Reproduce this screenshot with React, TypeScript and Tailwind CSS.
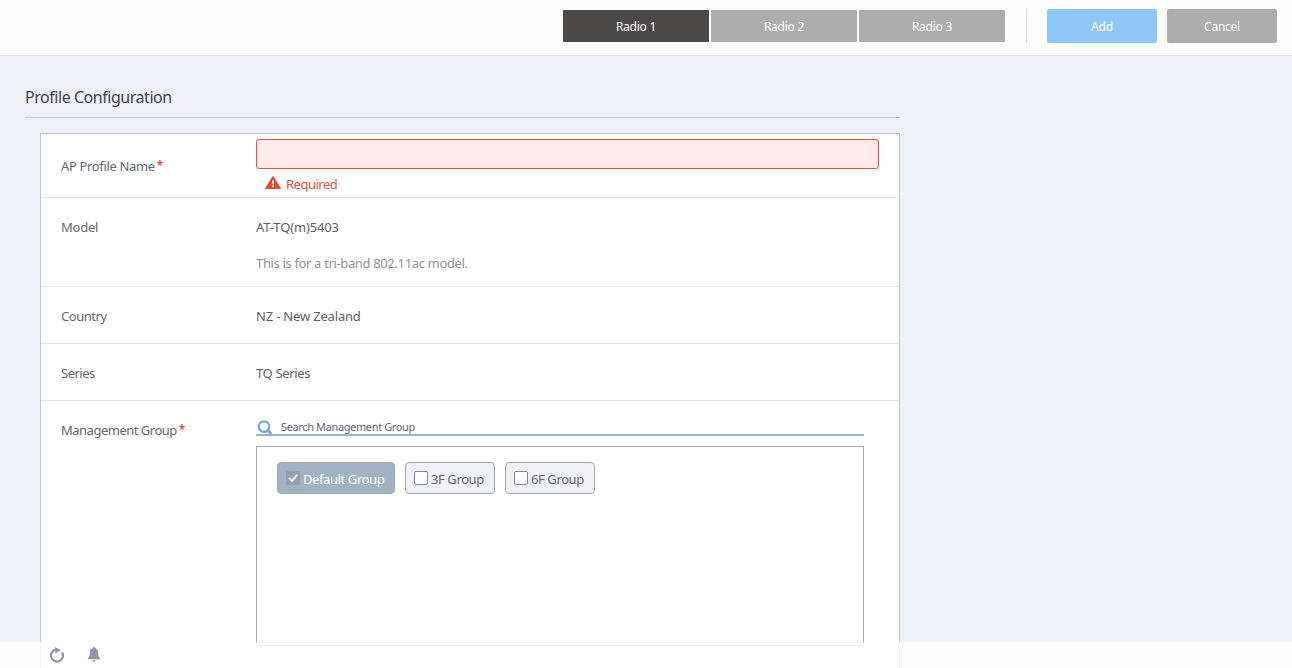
import React from "react";
import clsx from "clsx";

const RADIOS = ["Radio 1", "Radio 2", "Radio 3"];

const GROUPS = [
  { name: "Default Group", checked: true, width: "w-[118px]" },
  { name: "3F Group", checked: false, width: "w-[90px]" },
  { name: "6F Group", checked: false, width: "w-[90px]" },
];

function Header() {
  return (
    <header className="flex h-14 shrink-0 items-start justify-end border-b border-[#e2e4e6] bg-[#fcfcfc] pr-[15px] pt-[9px] text-[12px] tracking-[-0.25px] text-white">
      <div className="mt-px flex gap-[2px] bg-white">
        {RADIOS.map((radio, index) => (
          <button
            className={clsx(
              "h-8 w-[146px] pt-[2px]",
              index === 0 ? "bg-[#4b4a48]" : "bg-[#adadad]",
              index === 0 && "rounded-l-[1px]",
              index === 2 && "rounded-r-[1px]",
            )}
            key={radio}
          >
            {radio}
          </button>
        ))}
      </div>
      <div className="ml-[21px] h-[34px] w-px bg-[#e2e4e6]" />
      <button className="ml-5 h-[34px] w-[110px] rounded-[2px] bg-[#8fc8f8] pt-[2px] tracking-[-0.1px]">
        Add
      </button>
      <button className="ml-[10px] h-[34px] w-[110px] rounded-[2px] bg-[#adadad] pt-[2px]">
        Cancel
      </button>
    </header>
  );
}

function Row(props: {
  label: string;
  className: string;
  required?: boolean;
  labelClassName: string;
  children: React.ReactNode;
}) {
  return (
    <div className={clsx("flex border-b border-[#e2e4e8] pl-5", props.className)}>
      <div
        className={clsx(
          "w-[195px] shrink-0 whitespace-nowrap text-[#636678]",
          props.labelClassName,
        )}
      >
        {props.label}
        {props.required && (
          <span className="relative -top-px ml-[2px] text-[12px] font-semibold text-[#dd4b39]">
            *
          </span>
        )}
      </div>
      {props.children}
    </div>
  );
}

function WarningIcon() {
  return (
    <svg className="h-[13px] w-4" viewBox="0 0 16 13">
      <path
        d="M8 0.8 15.2 12.3H0.8Z"
        fill="#d9503a"
        stroke="#d9503a"
        strokeLinejoin="round"
        strokeWidth="1.4"
      />
      <path d="M7 4.4h2l-.4 4H7.4zM7 9.4h2v1.7H7z" fill="#fff" />
    </svg>
  );
}

function SearchIcon() {
  return (
    <svg
      className="h-4 w-4"
      fill="none"
      stroke="#78a9de"
      viewBox="0 0 16 16"
    >
      <circle cx="7" cy="6.6" r="5.3" strokeWidth="2.2" />
      <path d="m10.7 10.3 3.7 3.7" strokeWidth="3" />
    </svg>
  );
}

function GroupCheckbox({ checked }: { checked: boolean }) {
  return (
    <span
      className={clsx(
        "h-[14px] w-[14px] shrink-0 rounded-[2px]",
        checked ? "bg-[#959daf]" : "border border-[#85859a] bg-white",
      )}
    >
      {checked && (
        <svg
          className="h-[14px] w-[14px]"
          fill="none"
          stroke="#e8ebf0"
          strokeWidth="2"
          viewBox="0 0 14 14"
        >
          <path d="m3 7 3 3 5.5-6.5" />
        </svg>
      )}
    </span>
  );
}

function ManagementGroup() {
  return (
    <div className="w-[608px]">
      <div className="mt-[15px] flex h-5 items-center border-b-2 border-[#9fb5c7] pl-px text-[11px] text-[#636678]">
        <div className="relative top-[3px]">
          <SearchIcon />
        </div>
        <span className="ml-2 pt-[3px] tracking-[-0.37px]">
          Search Management Group
        </span>
      </div>
      <div className="mt-[10px] flex h-[200px] items-start gap-[10px] border border-[#a9a9a9] pl-5 pt-[15px]">
        {GROUPS.map((group) => (
          <label
            className={clsx(
              "flex h-8 items-center gap-[3px] whitespace-nowrap rounded-[4px] border border-[#a9a9a9] pl-2 tracking-[-0.4px]",
              group.width,
              group.checked
                ? "bg-[#9fb3c5] text-white"
                : "bg-[#f0f1f6] text-[#636678]",
            )}
            key={group.name}
          >
            <GroupCheckbox checked={group.checked} />
            <span className="pt-[2px]">{group.name}</span>
          </label>
        ))}
      </div>
    </div>
  );
}

function StatusBar() {
  return (
    <footer className="absolute inset-x-0 bottom-0 flex h-[26px] bg-white/80 pl-[49px] pt-[5px]">
      <svg className="h-4 w-4" viewBox="0 0 16 16">
        <path
          d="M13.1 5.4A6 6 0 1 1 7 2.6"
          fill="none"
          stroke="#9095aa"
          strokeWidth="2.2"
        />
        <path d="M6 0 12 3.2 6.4 6.2Z" fill="#9095aa" />
      </svg>
      <svg className="ml-[21px] h-4 w-4" fill="#9095aa" viewBox="0 0 16 16">
        <path d="M8 0C8.7 0 9 .5 9 1.1C11.2 1.8 12.2 3.7 12.2 6C12.2 8.7 12.8 10 14.1 11.2V12.3H1.9V11.2C3.2 10 3.8 8.7 3.8 6C3.8 3.7 4.8 1.8 7 1.1C7 .5 7.3 0 8 0Z" />
        <path d="M6.3 13.2h3.4C9.5 14.3 8.9 14.8 8 14.8S6.5 14.3 6.3 13.2Z" />
      </svg>
    </footer>
  );
}

export default function App() {
  return (
    <div className="relative flex h-screen flex-col overflow-hidden bg-[#f0f1f6] font-['Noto_Sans','Open_Sans',sans-serif] text-[13px] leading-5">
      <Header />
      <main className="w-[900px] pl-[25px]">
        <h1 className="h-[62px] border-b border-[#c5c8cc] pt-[29px] text-[16px] leading-6 tracking-[-0.46px] text-[#41444b]">
          Profile Configuration
        </h1>
        <section className="ml-[15px] mt-[15px] h-[620px] border border-[#c5c8cc] bg-white text-[#5e6068]">
          <Row
            className="h-16"
            label="AP Profile Name"
            labelClassName="pt-[22px] tracking-[-0.35px]"
            required
          >
            <div>
              <input className="mt-[5px] block h-[30px] w-[623px] rounded-[3px] border border-[#e2513d] bg-[#ffe9ea]" />
              <div className="flex items-center pl-[9px] pt-[5px] text-[#e2513d]">
                <div className="relative -top-[2px]">
                  <WarningIcon />
                </div>
                <span className="ml-[5px] tracking-[-0.5px]">Required</span>
              </div>
            </div>
          </Row>
          <Row
            className="h-[89px]"
            label="Model"
            labelClassName="pt-[19px] tracking-[-0.25px]"
          >
            <div className="pt-[19px]">
              <p className="tracking-[-0.15px]">AT-TQ(m)5403</p>
              <p className="mt-4 tracking-[-0.35px] text-[#8e90a0]">
                This is for a tri-band 802.11ac model.
              </p>
            </div>
          </Row>
          <Row
            className="h-[57px]"
            label="Country"
            labelClassName="pt-[19px] tracking-[-0.45px]"
          >
            <div className="pt-[19px] tracking-[-0.18px]">NZ - New Zealand</div>
          </Row>
          <Row
            className="h-[57px]"
            label="Series"
            labelClassName="pt-[19px] tracking-[-0.5px]"
          >
            <div className="pt-[19px] tracking-[-0.35px]">TQ Series</div>
          </Row>
          <Row
            className="h-[300px]"
            label="Management Group"
            labelClassName="pt-[19px] tracking-[-0.5px]"
            required
          >
            <ManagementGroup />
          </Row>
        </section>
      </main>
      <StatusBar />
    </div>
  );
}
